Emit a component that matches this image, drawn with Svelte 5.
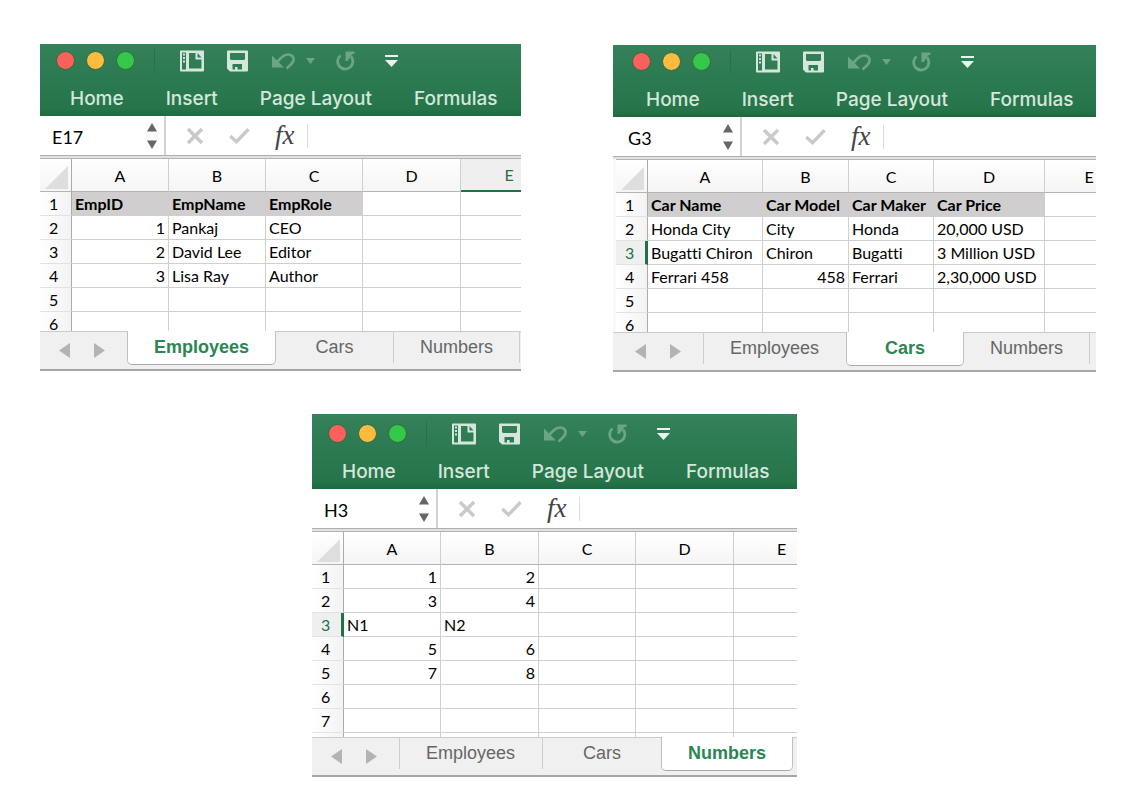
<script>
  const sheetNames = ['Employees', 'Cars', 'Numbers'];
  const ribbon = ['Home', 'Insert', 'Page Layout', 'Formulas'];
  const letters = ['A', 'B', 'C', 'D', 'E'];

  const books = [
    {
      id: 'employees',
      active: 'Employees',
      cell: 'E17',
      widths: [97, 97, 97, 98],
      header: ['EmpID', 'EmpName', 'EmpRole'],
      rows: [[1, 'Pankaj', 'CEO'], [2, 'David Lee', 'Editor'], [3, 'Lisa Ray', 'Author'], [], []],
      column: 'E'
    },
    {
      id: 'cars',
      active: 'Cars',
      cell: 'G3',
      widths: [115, 86, 85, 111],
      header: ['Car Name', 'Car Model', 'Car Maker', 'Car Price'],
      rows: [
        ['Honda City', 'City', 'Honda', '20,000 USD'],
        ['Bugatti Chiron', 'Chiron', 'Bugatti', '3 Million USD'],
        ['Ferrari 458', 458, 'Ferrari', '2,30,000 USD'],
        [],
        []
      ],
      row: 3
    },
    {
      id: 'numbers',
      active: 'Numbers',
      cell: 'H3',
      widths: [97, 98, 97, 98],
      rows: [[1, 2], [3, 4], ['N1', 'N2'], [5, 6], [7, 8], [], [], []],
      row: 3
    }
  ];

  const allRows = (book) => (book.header ? [book.header, ...book.rows] : book.rows);
</script>

{#snippet workbook(book)}
  <section class="book {book.id}" aria-label={book.active}>
    <header class="ribbon">
      <div class="toolbar">
        <div class="lights">
          <button class="light red" aria-label="Close"></button>
          <button class="light amber" aria-label="Minimize"></button>
          <button class="light green" aria-label="Zoom"></button>
        </div>
        <span class="rule"></span>
        <button class="tool page" aria-label="Gallery">
          <svg width="24" height="22" viewBox="0 0 24 22">
            <path fill="currentColor" fill-rule="evenodd" d="M1 .5H23a1 1 0 0 1 1 1V20.500a1 1 0 0 1-1 1H1a1 1 0 0 1-1-1V1.500A1 1 0 0 1 1 .5ZM2 2.500V19.500H6V2.500ZM9 3V18.500H21.500V9.500H15.500V3ZM17.500 3V7.500H21.500Z" />
            <path d="M4 3.500V12.500" stroke="currentColor" stroke-width="2" stroke-dasharray="2 1.500" />
          </svg>
        </button>
        <button class="tool save" aria-label="Save">
          <svg width="21" height="22" viewBox="0 0 21 22">
            <path fill="currentColor" fill-rule="evenodd" d="M1 .5H20a1 1 0 0 1 1 1V20.500a1 1 0 0 1-1 1H3L0 18.500V1.500a1 1 0 0 1 1-1ZM3 3V9L4 10H17L18 9V3ZM5.500 14V19.500H8V17H10.500V19.500H15V14Z" />
          </svg>
        </button>
        <button class="tool undo" aria-label="Undo">
          <svg width="24" height="20" viewBox="0 0 24 20">
            <path d="M4 12L9.500 6.500C14 2 20 3 21.500 7C22.500 11 19 13.500 14.500 17.500" fill="none" stroke="currentColor" stroke-width="2.600" />
            <path d="M0 4.500L12 16.500H0Z" fill="currentColor" />
          </svg>
        </button>
        <button class="tool more" aria-label="Undo history">
          <svg width="9" height="6" viewBox="0 0 9 6"><path d="M0 0H9L4.500 6Z" fill="currentColor" /></svg>
        </button>
        <button class="tool redo" aria-label="Redo">
          <svg width="20" height="20" viewBox="0 0 20 20">
            <path d="M4.500 4.500A7.600 7.600 0 1 0 15 5.500" fill="none" stroke="currentColor" stroke-width="2.800" />
            <path d="M9.500 .5H18.500V3H16.500L11.500 10H9.500Z" fill="currentColor" />
          </svg>
        </button>
        <button class="tool custom" aria-label="Customize toolbar">
          <svg width="13" height="12" viewBox="0 0 13 12"><path d="M0 0H13V2H0ZM0 5H13L6.500 12Z" fill="currentColor" /></svg>
        </button>
      </div>
      <nav class="menu">
        {#each ribbon as item}<button>{item}</button>{/each}
      </nav>
    </header>

    <div class="formula">
      <input class="cellname" value={book.cell} aria-label="Name box" />
      <button class="stepper" aria-label="Choose cell">
        <svg width="10" height="26" viewBox="0 0 10 26"><path d="M0 8.500L5 0L10 8.500ZM0 17.500H10L5 26Z" fill="currentColor" /></svg>
      </button>
      <div class="actions">
        <button aria-label="Cancel">
          <svg width="16" height="18" viewBox="0 0 16 18"><path d="M1 2L15 16M15 2L1 16" stroke="currentColor" stroke-width="3.400" /></svg>
        </button>
        <button class="enter" aria-label="Enter">
          <svg width="21" height="16" viewBox="0 0 21 16"><path d="M1.300 8L7.500 13.700L19.500 1.300" fill="none" stroke="currentColor" stroke-width="3.400" /></svg>
        </button>
        <button class="fx">fx</button>
      </div>
      <input class="entry" aria-label="Formula" />
    </div>

    <div class="sheet">
      <table>
        <colgroup>
          <col class="gutter" />
          {#each book.widths as w}<col style="width: {w}px" />{/each}
          <col />
        </colgroup>
        <thead>
          <tr>
            <th class="corner"><svg width="23" height="23" viewBox="0 0 23 23"><path d="M23 0V23H0Z" fill="#dedede" /></svg></th>
            {#each letters as l}<th class:picked={book.column === l}>{l}</th>{/each}
          </tr>
        </thead>
        <tbody>
          {#each allRows(book) as row, r}
            <tr>
              <th class:current={book.row === r + 1}>{r + 1 < 8 ? r + 1 : ''}</th>
              {#each letters as l, c}
                <td class:title={book.header && r === 0 && c < book.header.length} class:num={typeof row[c] === 'number'}>{row[c] ?? ''}</td>
              {/each}
            </tr>
          {/each}
        </tbody>
      </table>
    </div>

    <footer class="tabs">
      <div class="arrows">
        <button aria-label="Previous sheet"><svg width="11" height="15" viewBox="0 0 11 15"><path d="M11 0V15L0 7.500Z" fill="currentColor" /></svg></button>
        <button aria-label="Next sheet"><svg width="11" height="15" viewBox="0 0 11 15"><path d="M0 0V15L11 7.500Z" fill="currentColor" /></svg></button>
      </div>
      {#each sheetNames as name, i}
        <button class="tab" class:active={name === book.active} class:before={sheetNames[i + 1] === book.active}>{name}</button>
      {/each}
    </footer>
  </section>
{/snippet}

<main>
  <div class="pair">
    {@render workbook(books[0])}
    {@render workbook(books[1])}
  </div>
  <div class="single">
    {@render workbook(books[2])}
  </div>
</main>

<style>
  :global(body) {
    margin: 0;
    background: #fff;
  }
  main {
    padding: 44px 40px 20px;
    font-family: Lato, 'Open Sans', sans-serif;
    font-size: 16px;
    font-variant-ligatures: none;
    color: #000;
  }
  button,
  input {
    margin: 0;
    padding: 0;
    border: 0;
    background: none;
    font: inherit;
    color: inherit;
    min-width: 0;
  }
  svg {
    display: block;
  }
  .pair {
    display: grid;
    grid-template-columns: 481fr 483fr;
    column-gap: 92px;
    align-items: start;
  }
  .single {
    display: grid;
    grid-template-columns: 272fr 485fr 299fr;
    margin-top: 42px;
  }
  .single .book {
    grid-column: 2;
  }

  .book {
    --edge: 0px;
    --view: 173px;
    min-width: 0;
    overflow: hidden;
  }
  .cars {
    --edge: 3px;
    margin-top: 1px;
  }
  .numbers {
    --view: 206px;
  }

  .ribbon {
    background: linear-gradient(#34815a, #26744a 90%, #20693f);
    color: #d5e7dc;
    padding-left: var(--edge);
    height: 72px;
  }
  .numbers .ribbon {
    padding-top: 3px;
  }
  .toolbar {
    display: flex;
    align-items: center;
    height: 33px;
    padding-left: 16px;
  }
  .lights {
    display: flex;
    gap: 11px;
  }
  .light {
    width: 19px;
    height: 19px;
    border-radius: 50%;
    border: 1px solid #376b3f;
    box-sizing: border-box;
  }
  .red {
    background: #fc605c;
  }
  .amber {
    background: #fdbc40;
  }
  .green {
    background: #34c84a;
  }
  .rule {
    width: 1px;
    height: 24px;
    margin: 0 25px 0 19px;
    background: #2a6f49;
  }
  .tool {
    flex: none;
  }
  .save {
    margin-left: 23px;
  }
  .undo {
    margin-left: 24px;
  }
  .more {
    margin-left: 10px;
  }
  .redo {
    margin-left: 21px;
  }
  .custom {
    margin-left: 29px;
    color: #eaf4ee;
  }
  .undo,
  .more,
  .redo {
    color: #6ca486;
  }
  .menu {
    display: flex;
    gap: 42px;
    padding: 10px 0 0 30px;
    font: 500 19px/24px Inter, 'Liberation Sans', sans-serif;
    white-space: nowrap;
  }

  .formula {
    display: flex;
    align-items: center;
    height: 39px;
    padding-left: var(--edge);
    border-bottom: 1px solid #aeaeae;
    background: #fff;
  }
  .cellname {
    width: 95px;
    padding: 3px 0 0 12px;
    font-size: 18px;
    color: #000;
  }
  .stepper {
    color: #666;
  }
  .actions {
    display: flex;
    align-items: center;
    align-self: stretch;
    margin-left: 7px;
    padding-left: 21px;
    border-left: 2px solid #d2d2d2;
    color: #cacaca;
  }
  .enter {
    margin-left: 26px;
  }
  .fx {
    margin-left: 25px;
    padding: 0 12px 2px 0;
    font: italic 27px/28px 'Liberation Serif', serif;
    color: #444;
  }
  .entry {
    flex: 1;
    height: 24px;
    border-left: 1px solid #ddd;
  }

  .sheet {
    height: var(--view);
    overflow: hidden;
    padding-left: var(--edge);
    border-top: 2px solid #e2e2e2;
    background: linear-gradient(90deg, #f8f8f8 30px, #fff 31px);
  }
  table {
    width: max(100%, 518px);
    table-layout: fixed;
    border-spacing: 0;
    border-top: 1px solid #b4b4b4;
  }
  .gutter {
    width: 32px;
  }
  th,
  td {
    box-sizing: border-box;
    height: 24px;
    padding: 0 3px;
    border-right: 1px solid #cfcfcf;
    border-bottom: 1px solid #cfcfcf;
    line-height: 23px;
    white-space: nowrap;
    text-align: left;
    font-weight: 400;
  }
  tbody th {
    padding: 0 9px;
    border-right: 1px solid #ababab;
    border-bottom-color: #e2e2e2;
    background: linear-gradient(90deg, #fff, #f3f3f3);
    color: #000;
  }
  thead th {
    height: 33px;
    text-align: center;
    border-bottom: 1px solid #b4b4b4;
    background: linear-gradient(#fff, #f5f5f5);
  }
  thead .corner {
    padding: 5px 0 0 5px;
    border-right-color: #ababab;
  }
  thead .picked {
    background: #efefef;
    color: #1f7246;
    border-bottom: 2px solid #1f7246;
  }
  tbody .current {
    background: #efefef;
    color: #1f7246;
    border-right: 3px solid #1f7246;
  }
  td.title {
    background: #d0cece;
    border-color: #d0cece;
    font-weight: 700;
  }
  td.num {
    text-align: right;
  }

  .tabs {
    display: flex;
    align-items: flex-start;
    height: 38px;
    padding-left: var(--edge);
    background: #f0f0f0;
    border-bottom: 2px solid #a6a6a6;
    font: 18px/30px 'Liberation Sans', sans-serif;
    color: #666;
    box-shadow: inset 0 1px #cbcbcb;
  }
  .arrows {
    display: flex;
    gap: 24px;
    box-sizing: border-box;
    width: 87px;
    flex: none;
    padding: 12px 0 0 19px;
    color: #b3b3b3;
  }
  .tab {
    box-sizing: border-box;
    height: 32px;
    min-width: 118px;
    padding: 0 26px;
    flex: none;
    line-height: 30px;
    border-right: 1px solid #cdcdcd;
  }
  .arrows + .tab:not(.active) {
    padding: 0 27px 0 26px;
    border-left: 1px solid #cdcdcd;
  }
  .tab.before {
    border-right: 0;
  }
  .tab.active {
    height: 34px;
    padding: 0 26px 2px;
    background: #fff;
    border: 1px solid #c0c0c0;
    border-top: 0;
    border-bottom-color: #a8a8a8;
    border-radius: 0 0 5px 5px;
    font-weight: 700;
    color: #2a8653;
  }
</style>
